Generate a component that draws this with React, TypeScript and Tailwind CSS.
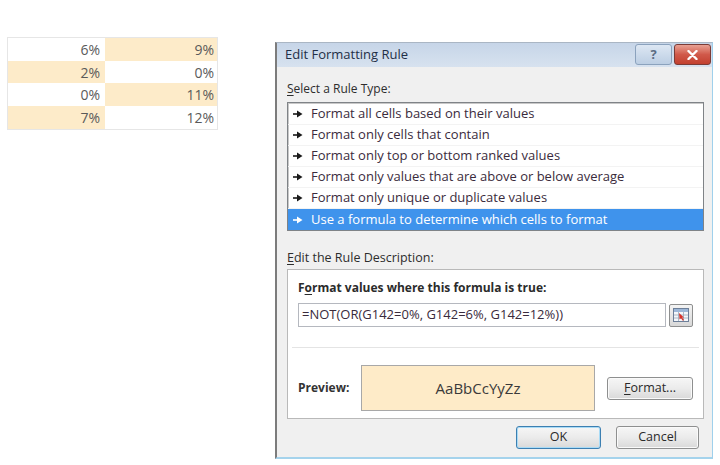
import React from "react";

const ui = { fontFamily: '"Open Sans", "Noto Sans", sans-serif' };
const cellFont = { fontFamily: '"Open Sans", "Liberation Sans", sans-serif' };

type Cell = { v: string; hi: boolean };
const grid: Cell[][] = [
  [{ v: "6%", hi: false }, { v: "9%", hi: true }],
  [{ v: "2%", hi: true }, { v: "0%", hi: false }],
  [{ v: "0%", hi: false }, { v: "11%", hi: true }],
  [{ v: "7%", hi: true }, { v: "12%", hi: false }],
];

const rules = [
  "Format all cells based on their values",
  "Format only cells that contain",
  "Format only top or bottom ranked values",
  "Format only values that are above or below average",
  "Format only unique or duplicate values",
  "Use a formula to determine which cells to format",
];

function Bullet({ light }: { light: boolean }) {
  const c = light ? "#ffffff" : "#1a1a1a";
  return (
    <svg width="10" height="8" viewBox="0 0 10 8" className="shrink-0">
      <rect x="0" y="3.2" width="5" height="1.6" fill={c} />
      <path d="M4 0.5 L9.5 4 L4 7.5 Z" fill={c} />
    </svg>
  );
}

function Sheet() {
  return (
    <div className="mt-[37px] ml-[7px] w-[211px] border border-[#e6e6e6] bg-white" style={cellFont}>
      {grid.map((row, i) => (
        <div key={i} className="flex h-[22.7px]">
          {row.map((c, j) => (
            <div
              key={j}
              className={`flex items-center justify-end text-[14px] text-[#5a5a5a] ${
                j === 0 ? "w-[97px] pr-[5px]" : "flex-1 pr-[3px]"
              } ${c.hi ? "bg-[#fdebc9]" : "bg-white"}`}
            >
              {c.v}
            </div>
          ))}
        </div>
      ))}
    </div>
  );
}

function Btn({
  children,
  w,
  primary,
}: {
  children: React.ReactNode;
  w: string;
  primary?: boolean;
}) {
  return (
    <div
      className={`flex h-[23px] items-center justify-center rounded-[3px] border bg-gradient-to-b from-[#f6f6f6] via-[#ebebeb] to-[#d9d9d9] text-[12.5px] text-[#2a2a2a] ${w} ${
        primary
          ? "border-[#3c7fb1] shadow-[inset_0_0_0_1px_#a9dbf6]"
          : "border-[#8e8f8f] shadow-[inset_0_0_0_1px_#fafafa]"
      }`}
    >
      {children}
    </div>
  );
}

function RefIcon() {
  return (
    <svg width="16" height="14" viewBox="0 0 16 14">
      <rect x="0.5" y="0.5" width="15" height="13" fill="#f4f7fb" stroke="#6d7f99" />
      <rect x="1" y="1" width="14" height="3" fill="#9db7d8" />
      <path d="M1 7 H15 M1 10 H15 M5.5 4 V13 M10.5 4 V13" stroke="#9aa7b8" strokeWidth="0.8" />
      <path d="M6 5 L11 9.5 L9 9.5 L11 12 L9.8 12.8 L8 10.3 L6.6 11.6 Z" fill="#d8322a" />
    </svg>
  );
}

function Dialog() {
  return (
    <div
      className="mt-[42px] ml-[57px] flex h-[417px] w-[438px] flex-col border-l-2 border-r border-b-2 border-t border-l-[#7c7c7c] border-r-[#9fd0ec] border-b-[#a5d3ec] border-t-[#aab6c4] bg-[#f0f0f0]"
      style={ui}
    >
      {/* title bar */}
      <div className="flex h-[24px] items-center justify-between bg-gradient-to-b from-[#c6d5e8] to-[#d7e2ef] pl-[8px] pr-[1px]">
        <span className="text-[13px] text-[#1f2f47]">Edit Formatting Rule</span>
        <div className="flex items-center gap-[2px] self-start pt-[1px]">
          <div className="flex h-[21px] w-[37px] items-center justify-center rounded-[3px] border border-[#8ba2bd] bg-gradient-to-b from-[#dde7f3] to-[#bccee3] text-[13px] font-bold text-[#5a6c84]">
            ?
          </div>
          <div className="flex h-[21px] w-[37px] items-center justify-center rounded-[3px] border border-[#7b3b36] bg-gradient-to-b from-[#e8a093] via-[#d0594a] to-[#c2402f]">
            <svg width="11" height="10" viewBox="0 0 11 10">
              <path d="M1.5 1 L9.5 9 M9.5 1 L1.5 9" stroke="#ffffff" strokeWidth="2.4" strokeLinecap="round" />
            </svg>
          </div>
        </div>
      </div>

      {/* body */}
      <div className="flex flex-1 flex-col pl-[10px] pr-[7px] pt-[14px] text-[12px] text-[#2d2d2d]">
        <div className="h-[16px] leading-[16px]">
          <span className="underline underline-offset-2">S</span>elect a Rule Type:
        </div>
        <div className="mt-[5px] h-[129px] w-[417px] border border-[#7f8387] bg-white pt-[1px] shadow-[inset_1px_1px_0_#c8c8c8]">
          {rules.map((r, i) => {
            const sel = i === rules.length - 1;
            return (
              <div
                key={r}
                className={`flex h-[21px] items-center gap-[8px] pl-[5px] text-[13px] ${
                  sel ? "bg-[#3f93ec] text-white" : "border-b border-[#f3f3f3] text-[#3a2b3c]"
                }`}
              >
                <Bullet light={sel} />
                <span>{r}</span>
              </div>
            );
          })}
        </div>

        <div className="mt-[19px] h-[16px] text-[12.5px] leading-[16px]">
          <span className="underline underline-offset-2">E</span>dit the Rule Description:
        </div>
        <div className="mt-[3px] flex h-[150px] w-[417px] flex-col border border-[#b9b9b9] bg-white">
          <div className="px-[10px] pt-[10px]">
            <div className="h-[16px] font-bold leading-[16px] text-[#2b2b2b]">
              F<span className="underline underline-offset-2">o</span>rmat values where this formula is true:
            </div>
            <div className="mt-[7px] flex items-center gap-[3px]">
              <div className="flex h-[24px] w-[368px] items-center border border-[#b5b8bf] pl-[3px] text-[13px] text-[#3a2b3c]">
                =NOT(OR(G142=0%, G142=6%, G142=12%))
              </div>
              <div className="flex h-[23px] w-[24px] items-center justify-center rounded-[2px] border border-[#8e8f8f] bg-gradient-to-b from-[#f4f4f4] to-[#d8d8d8]">
                <RefIcon />
              </div>
            </div>
          </div>
          <div className="mx-[4px] mt-[20px] h-px bg-[#e4e4e4]" />
          <div className="flex items-center pl-[10px] pt-[17px]">
            <span className="w-[63px] font-bold text-[#333]">Preview:</span>
            <div className="flex h-[46px] w-[234px] items-center justify-center border border-[#a8a8a8] bg-[#feebc8] text-[15px] text-[#3a3a3a]">
              AaBbCcYyZz
            </div>
            <div className="ml-[12px]">
              <Btn w="w-[86px]">
                <span>
                  <span className="underline underline-offset-2">F</span>ormat...
                </span>
              </Btn>
            </div>
          </div>
        </div>

        <div className="mt-[7px] flex justify-end gap-[15px] pr-[6px]">
          <Btn w="w-[85px]" primary>
            OK
          </Btn>
          <Btn w="w-[83px]">Cancel</Btn>
        </div>
      </div>
    </div>
  );
}

export default function App() {
  return (
    <div className="flex h-[465px] w-[720px] items-start overflow-hidden bg-white">
      <Sheet />
      <Dialog />
    </div>
  );
}
